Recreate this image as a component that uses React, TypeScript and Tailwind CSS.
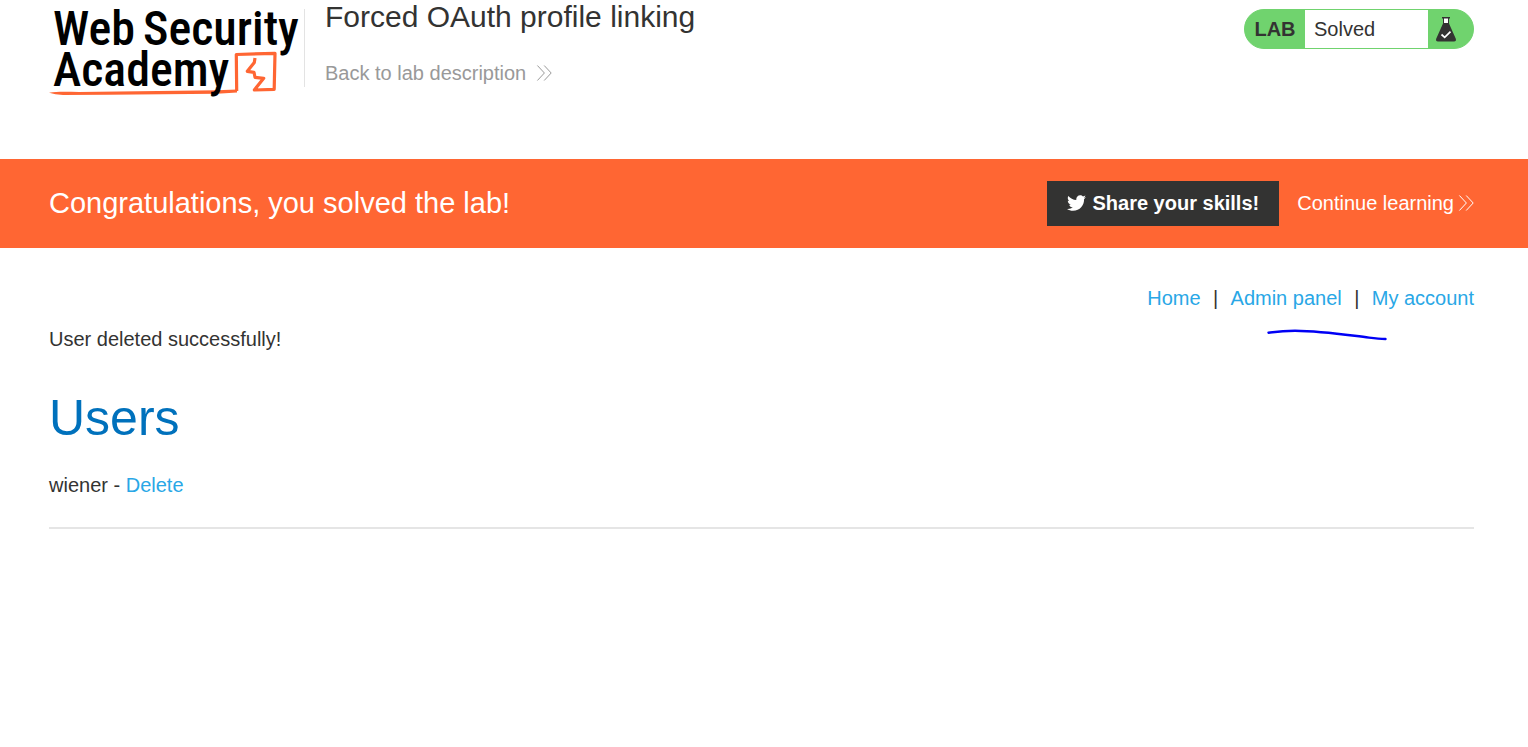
import { FaTwitter } from "react-icons/fa";

function DoubleChevron() {
  return (
    <svg
      viewBox="0 0 16 16"
      className="h-4 w-4 shrink-0"
      fill="none"
      stroke="currentColor"
      strokeWidth="1"
      aria-hidden="true"
    >
      <path d="M1.4 .5 8.4 8 1.4 15.5M8.200 .5 15.200 8 8.200 15.5" />
    </svg>
  );
}

function Logo() {
  return (
    <svg
      viewBox="0 0 252 100"
      className="h-[100px] w-[252px] shrink-0"
      role="img"
      aria-label="Web Security Academy"
    >
      <path
        d="M0 92.800 C8 91.400 18 91.900 30 92 L168 90.200 L188 89.400 V92.600 L168 93.800 L60 94.700 L14 94.900 Q6 94.600 0 92.800Z"
        fill="#ff6633"
      />
      <path
        d="M187.700 91 L187.300 54.500 L226 53.300 L225.200 89.300 L205.300 90 L214.700 78.300 L206 77.300 L205 72.300 L198.300 71.300 L205.300 62.500 L206 58"
        fill="none"
        stroke="#ff6633"
        strokeWidth="3.200"
        strokeLinejoin="round"
      />
      <g
        fill="#000"
        className="font-['Roboto_Condensed','Liberation_Sans_Narrow',Roboto,sans-serif] text-[48px] font-medium"
      >
        <text x="4" y="45">Web</text>
        <text x="94" y="45">Security</text>
        <text x="4" y="86">Academy</text>
      </g>
    </svg>
  );
}

function Flask() {
  return (
    <svg viewBox="0 0 22 26" className="h-[26px] w-[22px]" aria-hidden="true">
      <path d="M8.500 2 H13.500 V7.500 H8.500Z" fill="#fff" />
      <path
        d="M7 1 H15 V2.400 H14 V7.500 L20.800 22.800 Q21.600 25.500 19 25.500 H3 Q.4 25.500 1.200 22.800 L8 7.500 V2.400 H7Z M9 2.400 V7 H13 V2.400Z"
        fill="#333332"
        fillRule="evenodd"
      />
      <path d="M6.500 18.500 9.700 21.300 15.500 15.700" fill="none" stroke="#fff" strokeWidth="1.700" />
    </svg>
  );
}

function LabStatus() {
  return (
    <div className="mt-[9px] flex h-10 w-[230px] overflow-hidden rounded-[20px] border border-[#70d36e] bg-[#70d36e] text-xl text-[#333332]">
      <span className="flex w-[60px] items-center justify-center font-bold">LAB</span>
      <p className="flex flex-1 items-center bg-white pl-[9px]">Solved</p>
      <span className="flex w-[45px] items-center pl-[7px]">
        <Flask />
      </span>
    </div>
  );
}

export default function App() {
  return (
    <div className="font-['Liberation_Sans',Arial,sans-serif] text-xl leading-[30px] text-[#333332]">
      <header className="flex h-[159px] items-start pr-[54px] pl-[49px]">
        <a href="#academy">
          <Logo />
        </a>
        <div className="mt-[9px] ml-[3px] h-[78px] w-px bg-[#e3e3e3]" />
        <div className="ml-5 flex-1">
          <h2 className="text-[30px] leading-[34px]">Forced OAuth profile linking</h2>
          <a href="#lab" className="mt-6 inline-flex items-center gap-[10px] text-[#999999]">
            Back to lab description
            <DoubleChevron />
          </a>
        </div>
        <LabStatus />
      </header>

      <section className="flex h-[89px] items-center bg-[#ff6633] pr-[54px] pl-[49px] text-white">
        <h4 className="flex-1 pb-[2px] text-[29px]">Congratulations, you solved the lab!</h4>
        <button
          type="button"
          className="flex h-[45px] items-center gap-[6px] bg-[#333332] px-5 pb-[2px] font-bold"
        >
          <FaTwitter className="h-5 w-[19px]" aria-hidden="true" />
          Share your skills!
        </button>
        <a href="#learn" className="ml-[18px] flex items-center gap-1 pb-[2px]">
          Continue learning
          <DoubleChevron />
        </a>
      </section>

      <main className="pt-[35px] pr-[54px] pl-[49px]">
        <nav className="relative flex justify-end gap-3">
          <a href="#home" className="text-[#29a7e6]">Home</a>
          <span className="w-[6px] text-center">|</span>
          <a href="#admin" className="text-[#29a7e6]">Admin panel</a>
          <span className="w-[6px] text-center">|</span>
          <a href="#account" className="text-[#29a7e6]">My account</a>
          <svg
            viewBox="0 0 120 14"
            className="absolute top-[44px] right-[87px] h-[14px] w-[120px]"
            fill="none"
            stroke="#0000f5"
            strokeWidth="2.400"
            strokeLinecap="round"
            aria-hidden="true"
          >
            <path d="M1.500 5.700 C10 4.500 18 3.700 28 3.700 C56 4 80 8 102 10.600 Q112 12 118.500 12" />
          </svg>
        </nav>
        <p className="mt-[11px]">User deleted successfully!</p>
        <h1 className="mt-[34px] text-[50px] leading-[60px] text-[#0071bc]">Users</h1>
        <div className="mt-[22px]">
          wiener - <a href="#delete" className="text-[#29a7e6]">Delete</a>
        </div>
        <hr className="mt-[27px] border-t-2 border-[#e5e5e5]" />
      </main>
    </div>
  );
}
